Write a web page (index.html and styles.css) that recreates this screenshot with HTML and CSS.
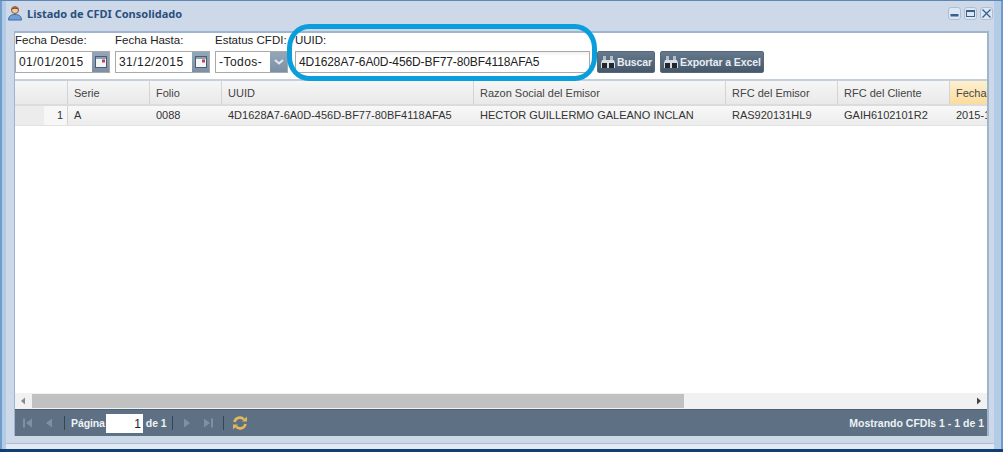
FILE: index.html
```html
<!DOCTYPE html>
<html lang="es">
<head>
<meta charset="UTF-8">
<meta name="viewport" content="width=device-width, initial-scale=1.0">
<title>Listado de CFDI Consolidado</title>
<link rel="stylesheet" href="styles.css">
</head>
<body>

<div class="window">
  <div class="title-bar">
    <svg class="user-icon" width="16" height="16" viewBox="0 0 16 16">
      <path d="M1.500 15c0-4 2.500-5.500 6.500-5.500s6.500 1.500 6.500 5.500z" fill="#6f9fd8" stroke="#3f6ca5"/>
      <circle cx="8" cy="5" r="3.500" fill="#f2c9a0" stroke="#8a5a35"/>
      <path d="M4.500 4.500c.5-3 6.500-3 7 0-2-1-5-1-7 0z" fill="#7a4a25"/>
    </svg>
    <span class="title-text">Listado de CFDI Consolidado</span>
    <div class="window-tools">
      <span class="tool-btn"><svg width="11" height="11" viewBox="0 0 11 11"><rect x="1.500" y="6" width="8" height="2.500" fill="#38608f"/></svg></span>
      <span class="tool-btn"><svg width="11" height="11" viewBox="0 0 11 11"><rect x="1.500" y="2.500" width="8" height="6" fill="none" stroke="#38608f"/><rect x="1.500" y="2" width="8" height="2" fill="#38608f"/></svg></span>
      <span class="tool-btn"><svg width="11" height="11" viewBox="0 0 11 11"><path d="M1.500 1.500l8 8M9.500 1.500l-8 8" stroke="#38608f" stroke-width="1.300" fill="none"/></svg></span>
    </div>
  </div>

  <div class="panel">
    <div class="filters">
      <div class="field">
        <label>Fecha Desde:</label>
        <div class="input-box date-box">
          <span class="input-value">01/01/2015</span>
          <span class="trigger">
            <svg width="14" height="14" viewBox="0 0 14 14"><rect x="1.500" y="1.500" width="11" height="11" fill="#f4f4f4" stroke="#4a5d70"/><rect x="2" y="2" width="10" height="2" fill="#8aa0b5"/><rect x="8" y="4.500" width="3" height="3" fill="#c0405a"/></svg>
          </span>
        </div>
      </div>
      <div class="field">
        <label>Fecha Hasta:</label>
        <div class="input-box date-box">
          <span class="input-value">31/12/2015</span>
          <span class="trigger">
            <svg width="14" height="14" viewBox="0 0 14 14"><rect x="1.500" y="1.500" width="11" height="11" fill="#f4f4f4" stroke="#4a5d70"/><rect x="2" y="2" width="10" height="2" fill="#8aa0b5"/><rect x="8" y="4.500" width="3" height="3" fill="#c0405a"/></svg>
          </span>
        </div>
      </div>
      <div class="field status-field">
        <label>Estatus CFDI:</label>
        <div class="input-box status-box">
          <span class="input-value">-Todos-</span>
          <span class="trigger">
            <svg width="12" height="12" viewBox="0 0 12 12"><path d="M2 4l4 3.500 4-3.500" fill="none" stroke="#e4e9ee" stroke-width="2"/></svg>
          </span>
        </div>
      </div>
      <div class="field uuid-field">
        <label>UUID:</label>
        <div class="input-box uuid-box">
          <span class="input-value">4D1628A7-6A0D-456D-BF77-80BF4118AFA5</span>
        </div>
      </div>
      <div class="action-btn">
        <svg width="16" height="14" viewBox="0 0 16 14"><use href="#binoculars"/></svg>Buscar
      </div>
      <div class="action-btn">
        <svg width="16" height="14" viewBox="0 0 16 14"><use href="#binoculars"/></svg>Exportar a Excel
      </div>
    </div>

    <div class="grid">
      <div class="grid-head">
        <div class="col-num"></div>
        <div>Serie</div>
        <div>Folio</div>
        <div>UUID</div>
        <div>Razon Social del Emisor</div>
        <div>RFC del Emisor</div>
        <div>RFC del Cliente</div>
        <div class="sorted">Fecha</div>
      </div>
      <div class="grid-row">
        <div class="col-num"><span class="row-number">1</span></div>
        <div>A</div>
        <div>0088</div>
        <div>4D1628A7-6A0D-456D-BF77-80BF4118AFA5</div>
        <div>HECTOR GUILLERMO GALEANO INCLAN</div>
        <div>RAS920131HL9</div>
        <div>GAIH6102101R2</div>
        <div>2015-1</div>
      </div>
      <div class="grid-empty"></div>
      <div class="h-scroll">
        <svg width="16" height="16" viewBox="0 0 16 16"><path d="M10 4.500v7l-4-3.500z" fill="#8a8a8a"/></svg>
        <div class="scroll-track"><div class="scroll-thumb"></div></div>
        <svg width="16" height="16" viewBox="0 0 16 16"><path d="M6 4.500v7l4-3.500z" fill="#444"/></svg>
      </div>
    </div>

    <div class="pager">
      <svg class="pager-icon" width="16" height="16" viewBox="0 0 16 16"><path d="M3 3.500h2v9h-2zM12 3.500v9l-6-4.500z"/></svg>
      <svg class="pager-icon" width="16" height="16" viewBox="0 0 16 16"><path d="M11 3.500v9l-6-4.500z"/></svg>
      <span class="pager-sep"></span>
      <span class="pager-text">Página</span>
      <span class="page-input">1</span>
      <span class="pager-text">de 1</span>
      <span class="pager-sep after-text"></span>
      <svg class="pager-icon" width="16" height="16" viewBox="0 0 16 16"><path d="M5 3.500v9l6-4.500z"/></svg>
      <svg class="pager-icon" width="16" height="16" viewBox="0 0 16 16"><path d="M11 3.500h2v9h-2zM4 3.500v9l6-4.500z"/></svg>
      <span class="pager-sep"></span>
      <svg class="refresh-icon" width="16" height="16" viewBox="0 0 16 16"><path d="M2.500 7a5.500 5.500 0 0 1 9.500-2.500" fill="none" stroke="#e3b85a" stroke-width="2.600"/><path d="M13.500 9a5.500 5.500 0 0 1-9.500 2.500" fill="none" stroke="#e3b85a" stroke-width="2.600"/><path d="M10 6.500h5v-5zM6 9.500h-5v5z" fill="#e3b85a"/></svg>
      <span class="pager-info">Mostrando CFDIs 1 - 1 de 1</span>
    </div>
  </div>

  <div class="highlight"></div>
</div>

<svg width="0" height="0" class="defs">
  <defs>
    <g id="binoculars">
      <path d="M3 1h3v4H3zM10 1h3v4h-3z" fill="#b4bec8"/>
      <path d="M2 5h12l1 3v5H1V8z" fill="#d5dce2"/>
      <path d="M2 8h5v5H2zM9 8h5v5H9z" fill="#20262c"/>
    </g>
  </defs>
</svg>

</body>
</html>
```

FILE: styles.css
```css
body {
  margin: 0;
  font-family: "Liberation Sans", Arial, sans-serif;
  font-size: 11px;
  color: #333;
  background-color: #123f73;
}
.window {
  position: relative;
  box-sizing: border-box;
  width: 1003px;
  height: 449px;
  display: flex;
  flex-direction: column;
  padding: 0 14px 13px 14px;
  background-color: #cdd9e8;
  border-top: 1px solid #5d87b5;
  box-shadow: inset 2px 0 0 #6f9ccb, inset 6px 0 0 #b4cbe6, inset -2px 0 0 #6f9ccb, inset -9px 0 0 #b4cbe6, inset 0 -5px 0 #e2eaf4, inset 0 -6px 0 #a9bdd4;
}
.title-bar {
  height: 30px;
  box-sizing: border-box;
  padding-bottom: 6px;
  flex: none;
  display: flex;
  align-items: center;
  margin-left: -7px;
}
.user-icon {
  margin-right: 4px;
}
.title-text {
  font-family: "Noto Sans", sans-serif;
  font-size: 11px;
  font-weight: bold;
  color: #2b4f7e;
}
.window-tools {
  margin-left: auto;
  margin-right: -4px;
  display: flex;
  gap: 3px;
}
.tool-btn {
  width: 13px;
  height: 13px;
  box-sizing: border-box;
  background-color: #dde7f3;
  border: 1px solid #aebfd4;
  border-radius: 3px;
  display: flex;
}
.panel {
  flex: 1;
  display: flex;
  flex-direction: column;
  min-height: 0;
  border-top: 2px solid #9db5cf;
  border-left: 1px solid #9db5cf;
  border-right: 2px solid #9db5cf;
  background-color: #fff;
}
.filters {
  height: 48px;
  flex: none;
  box-sizing: border-box;
  display: flex;
  align-items: flex-start;
  border-bottom: 2px solid #c5d0da;
}
.field {
  display: flex;
  flex-direction: column;
  margin-right: 5px;
}
.field label {
  font-size: 11.500px;
  line-height: 14px;
  height: 18px;
  color: #222;
  white-space: nowrap;
}
.input-box {
  box-sizing: border-box;
  height: 22px;
  display: flex;
  align-items: center;
  justify-content: space-between;
  border: 1px solid #a9a9a9;
  background-color: #fff;
  font-size: 12px;
  letter-spacing: 0.450px;
  color: #222;
}
.input-value {
  padding-left: 3px;
  white-space: nowrap;
}
.date-box {
  width: 95px;
}
.status-box {
  width: 73px;
}
.status-field {
  margin-right: 7px;
}
.uuid-field {
  margin-right: 7px;
}
.uuid-box {
  width: 295px;
  background: linear-gradient(#f0f0f0, #fff 4px);
  letter-spacing: -0.100px;
}
.trigger {
  width: 17px;
  height: 20px;
  display: flex;
  align-items: center;
  justify-content: center;
  background: linear-gradient(#94a7ba, #7b90a6);
}
.action-btn {
  box-sizing: border-box;
  height: 22px;
  margin-top: 18px;
  margin-right: 5px;
  padding: 0 2px;
  display: flex;
  align-items: center;
  gap: 1px;
  color: #e8edf2;
  font-weight: bold;
  font-size: 10.500px;
  letter-spacing: -0.100px;
  background: linear-gradient(#66798c, #46596c);
  border: 1px solid #56677a;
  border-radius: 2px;
  white-space: nowrap;
}
.grid {
  flex: 1;
  min-height: 0;
  display: flex;
  flex-direction: column;
  overflow: hidden;
  background-color: #fff;
}
.grid-head,
.grid-row {
  display: grid;
  grid-template-columns: 53px 82px 72px 252px 252px 112px 112px 80px;
  width: 1015px;
  flex: none;
  box-sizing: border-box;
}
.grid-head {
  height: 25px;
  line-height: 24px;
  background: linear-gradient(#f6f6f6, #e9e9e9);
  border-bottom: 2px solid #dcdcdc;
  color: #444;
}
.grid-head > div {
  padding-left: 6px;
  border-right: 1px solid #d4d4d4;
  white-space: nowrap;
  overflow: hidden;
}
.grid-head .col-num {
  padding-left: 0;
}
.grid-head .sorted {
  background: linear-gradient(#fdf0d0, #fbdc9c);
  border-right: none;
}
.grid-row {
  height: 20px;
  line-height: 18px;
  background: linear-gradient(#f8f8f8, #ececec);
  border-bottom: 1px solid #e2e2e2;
}
.grid-row > div {
  padding-left: 6px;
  white-space: nowrap;
  overflow: hidden;
}
.grid-row .col-num {
  padding-left: 0;
  display: flex;
  justify-content: flex-end;
  background-color: #ececec;
  border-right: 1px solid #d4d4d4;
}
.row-number {
  width: 23px;
  box-sizing: border-box;
  text-align: right;
  padding-right: 4px;
  background-color: #f7f7f7;
}
.grid-empty {
  flex: 1;
}
.h-scroll {
  height: 16px;
  flex: none;
  display: flex;
  background-color: #f1f1f1;
}
.scroll-track {
  flex: 1;
  padding: 1px 0 1px 1px;
}
.scroll-thumb {
  width: 652px;
  height: 14px;
  background-color: #c1c1c1;
}
.pager {
  height: 27px;
  flex: none;
  display: flex;
  align-items: center;
  padding-left: 5px;
  background-color: #5d7084;
  border-top: 1px solid #4e6074;
  box-sizing: border-box;
}
.pager-icon {
  margin-right: 5px;
  fill: #7e91a4;
}
.pager-sep {
  width: 1px;
  height: 14px;
  margin: 0 6px 0 2px;
  background-color: #33475a;
}
.pager-sep.after-text {
  margin-left: 6px;
}
.refresh-icon {
  margin-left: 2px;
}
.pager-text {
  font-weight: bold;
  font-size: 10.500px;
  letter-spacing: -0.100px;
  color: #eef2f5;
}
.page-input {
  box-sizing: border-box;
  width: 37px;
  height: 19px;
  line-height: 20px;
  text-align: right;
  padding-right: 2px;
  margin: 0 3px 0 1px;
  color: #222;
  background-color: #fff;
  font-size: 12px;
}
.pager-info {
  margin-left: auto;
  padding-right: 3px;
  font-weight: bold;
  font-size: 10.500px;
  color: #eef2f5;
}
.highlight {
  position: absolute;
  left: 287px;
  top: 23px;
  width: 300px;
  height: 47px;
  border: 5px solid #0a9fdc;
  border-radius: 22px / 24px;
}
.defs {
  position: absolute;
}
```
